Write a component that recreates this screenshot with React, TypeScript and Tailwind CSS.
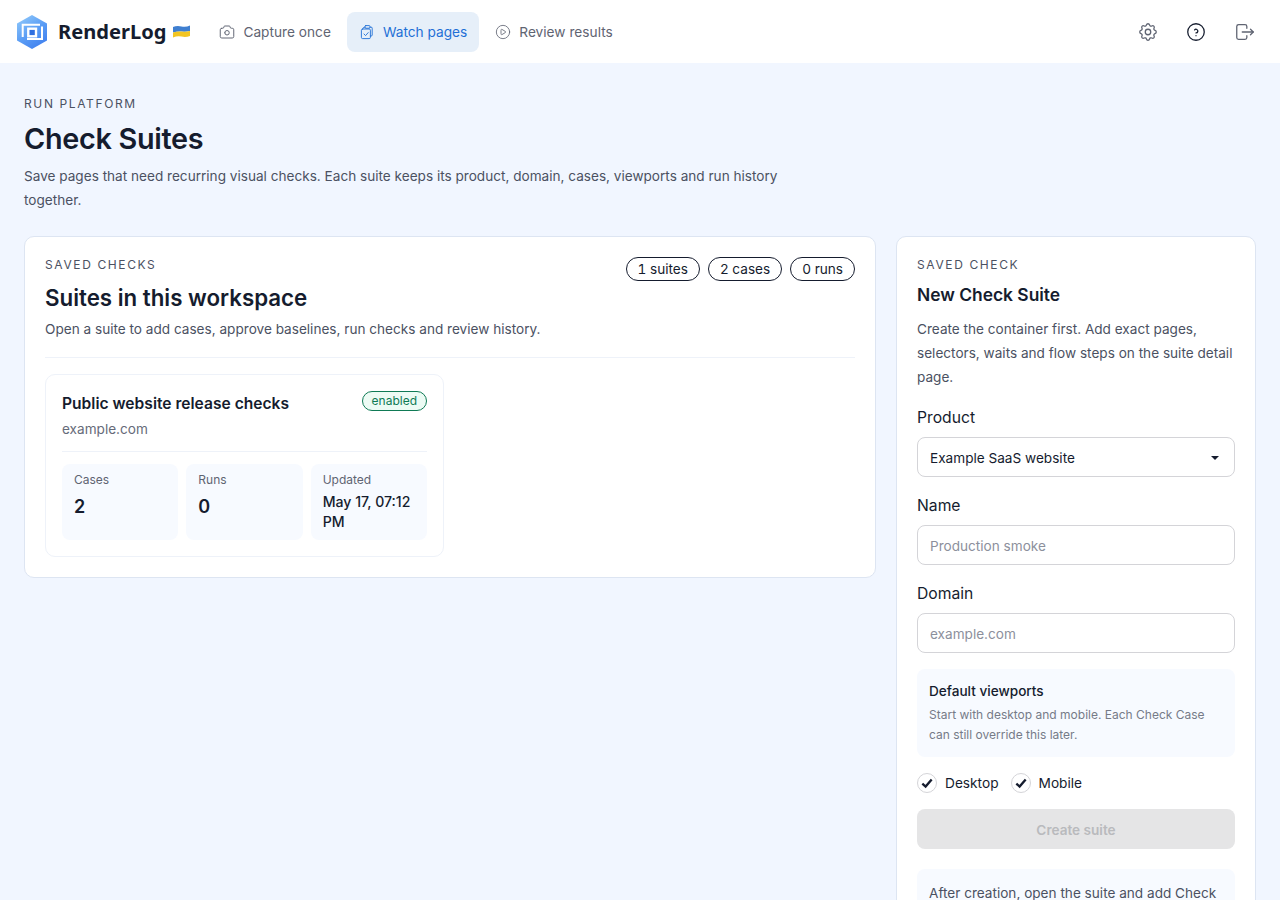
import { CirclePlay } from "lucide-react";
import { TbCamera, TbHelpCircle, TbLogout, TbSettings } from "react-icons/tb";

const Logo = () => (
  <svg width="32" height="36" viewBox="0 0 32 36" fill="none" className="shrink-0">
    <defs>
      <linearGradient id="hex" x1="4" y1="2" x2="28" y2="34" gradientUnits="userSpaceOnUse">
        <stop offset="0" stopColor="#8fc8fa" />
        <stop offset="0.5" stopColor="#5b9df5" />
        <stop offset="1" stopColor="#3d7dee" />
      </linearGradient>
    </defs>
    <path d="M16 1 L31 9.5 V26.5 L16 35 L1 26.5 V9.5 Z" fill="url(#hex)" />
    <path d="M6.7 23 V10.7 H24" stroke="#fff" strokeWidth="2" fill="none" />
    <path d="M26 12.5 V25 H11" stroke="#fff" strokeWidth="2" fill="none" />
    <rect x="12.3" y="14.7" width="7.7" height="7.6" fill="#2f6fe0" stroke="#fff" strokeWidth="2.4" />
  </svg>
);

const Flag = () => (
  <svg width="17" height="13" viewBox="0 0 17 13" className="shrink-0">
    <path d="M0 2 Q4 0.5 8.5 1.5 T17 0.5 V6 Q12.5 7 8.5 6.5 T0 7.5 Z" fill="#3f7fd0" />
    <path d="M0 7.5 Q4 6 8.5 6.5 T17 6 V11 Q12.5 12.5 8.5 11.5 T0 12.5 Z" fill="#f2c522" />
  </svg>
);

const WatchIcon = () => (
  <svg width="16" height="16" viewBox="0 0 16 16" fill="none" stroke="currentColor" strokeWidth="0.9" strokeLinejoin="round" strokeLinecap="round">
    <path d="M6 3.2 H5 A1 1 0 0 0 4.2 4.2 M11 3.2 H12 A1 1 0 0 1 13.2 4.2 V11 A1 1 0 0 1 12.2 12 H11.4" />
    <rect x="6" y="1.6" width="5" height="2.6" rx="0.8" />
    <rect x="2.4" y="5" width="9" height="9.6" rx="1.2" />
    <path d="M5 10 L6.6 11.6 L9.2 8.6" />
  </svg>
);

const nav = [
  { label: "Capture once", icon: <TbCamera size={18} strokeWidth={1.3} className="-mx-px" />, active: false },
  { label: "Watch pages", icon: <WatchIcon />, active: true },
  { label: "Review results", icon: <CirclePlay size={16} strokeWidth={1.25} />, active: false },
];

function TopBar() {
  return (
    <header className="flex h-[63px] items-center bg-white pl-4 pr-[15px]">
      <Logo />
      <span className="ml-[10px] pt-[2px] text-[20.1px] font-bold leading-none text-[#151c2e] [font-family:'Noto_Sans',sans-serif]">
        RenderLog
      </span>
      <span className="ml-[7px] mr-[17px]">
        <Flag />
      </span>
      <nav className="flex gap-1">
        {nav.map((item) => (
          <a
            key={item.label}
            className={
              item.active
                ? "flex h-10 items-center gap-2 rounded-lg bg-[#e6eff9] px-3 text-[13.7px] text-[#1f6fd6]"
                : "flex h-10 items-center gap-2 rounded-lg px-3 text-[13.7px] text-[#5f6472]"
            }
          >
            {item.icon}
            <span className="pt-[2px]">{item.label}</span>
          </a>
        ))}
      </nav>
      <div className="ml-auto flex items-center gap-2">
        <button className="flex size-10 items-center justify-center text-[#5f6472]">
          <TbSettings size={22} strokeWidth={1.4} />
        </button>
        <button className="flex size-10 items-center justify-center text-[#151c2e]">
          <TbHelpCircle size={22} strokeWidth={1.4} />
        </button>
        <button className="ml-px flex size-10 items-center justify-center text-[#5f6472]">
          <TbLogout size={22} strokeWidth={1.4} />
        </button>
      </div>
    </header>
  );
}

const Eyebrow = ({ children }: { children: string }) => (
  <p className="text-xs leading-4 tracking-[0.135em] text-[#4b5162]">{children}</p>
);

const Pill = ({ children }: { children: string }) => (
  <span className="rounded-full border border-[#151c2e] px-[11px] text-[13.6px] leading-[22px] text-[#151c2e] tabular-nums">{children}</span>
);

const Stat = ({ label, value, small }: { label: string; value: string; small?: boolean }) => (
  <div className="rounded-lg bg-[#f7faff] px-3 py-2">
    <p className="text-xs leading-4 text-[#5f6472]">{label}</p>
    <p className={small ? "mt-1 text-[14.08px] font-medium leading-5 text-[#151c2e]" : "mt-[5px] text-lg font-semibold leading-7 text-[#151c2e]"}>
      {value}
    </p>
  </div>
);

const Field = ({ label, children }: { label: string; children: React.ReactNode }) => (
  <div>
    <p className="mb-2 text-[15.7px] leading-[22px] text-[#151c2e]">{label}</p>
    {children}
  </div>
);

const Check = ({ label }: { label: string }) => (
  <label className="flex items-center gap-2 text-[13.7px] leading-5 text-[#151c2e]">
    <span className="flex size-5 items-center justify-center rounded-full border border-[#d4d4d8] bg-white">
      <svg width="14" height="14" viewBox="0 0 12 12" fill="none" stroke="#151c2e" strokeWidth="2">
        <path d="M2 6.5 L4.8 9 L10 3" />
      </svg>
    </span>
    {label}
  </label>
);

function SuitesCard() {
  return (
    <section className="flex-1 self-start rounded-[10px] border border-[#dde5f2] bg-white p-5">
      <div className="flex items-start justify-between">
        <div>
          <Eyebrow>SAVED CHECKS</Eyebrow>
          <h2 className="mt-[11px] text-[22.3px] font-semibold leading-7 text-[#151c2e]">Suites in this workspace</h2>
          <p className="mt-[5px] text-[13.6px] leading-6 text-[#4b5162]">
            Open a suite to add cases, approve baselines, run checks and review history.
          </p>
        </div>
        <div className="flex gap-2">
          <Pill>1 suites</Pill>
          <Pill>2 cases</Pill>
          <Pill>0 runs</Pill>
        </div>
      </div>
      <div className="mt-4 border-t border-[#eef2f9]" />
      <article className="mt-4 w-[399px] rounded-[10px] border border-[#eef2f9] bg-white p-4">
        <div className="flex items-start justify-between">
          <div>
            <h3 className="text-[15.6px] font-semibold leading-[26px] text-[#151c2e]">Public website release checks</h3>
            <p className="text-[13.6px] leading-6 text-[#666b79]">example.com</p>
          </div>
          <span className="rounded-full border border-[#0f7a55] bg-[#ecfbf4] px-[9px] text-xs leading-[18px] text-[#0f7a55]">enabled</span>
        </div>
        <div className="mt-[10px] border-t border-[#eef2f9]" />
        <div className="mt-3 grid grid-cols-3 gap-2">
          <Stat label="Cases" value="2" />
          <Stat label="Runs" value="0" />
          <Stat label="Updated" value="May 17, 07:12 PM" small />
        </div>
      </article>
    </section>
  );
}

function NewSuiteCard() {
  return (
    <aside className="w-[360px] shrink-0 rounded-[10px] border border-[#dde5f2] bg-white p-5">
      <Eyebrow>SAVED CHECK</Eyebrow>
      <h2 className="mt-[10px] text-[17.4px] font-semibold leading-6 text-[#151c2e]">New Check Suite</h2>
      <p className="mt-[10px] text-[13.6px] leading-6 text-[#4b5162]">
        Create the container first. Add exact pages, selectors, waits and flow steps on the suite detail page.
      </p>
      <div className="mt-[18px] flex flex-col gap-[18px]">
        <Field label="Product">
          <div className="flex h-10 items-center justify-between rounded-lg border border-[#d4d4d8] px-3 pt-[2px] text-[13.6px] text-[#151c2e]">
            Example SaaS website
            <span className="mr-[3px] border-x-4 border-t-[4px] border-x-transparent border-t-[#151c2e]" />
          </div>
        </Field>
        <Field label="Name">
          <input placeholder="Production smoke" className="h-10 w-full rounded-lg border border-[#d4d4d8] px-3 pt-[2px] text-[13.6px] placeholder:text-[#8c909c]" />
        </Field>
        <Field label="Domain">
          <input placeholder="example.com" className="h-10 w-full rounded-lg border border-[#d4d4d8] px-3 pt-[2px] text-[13.6px] placeholder:text-[#8c909c]" />
        </Field>
      </div>
      <div className="mt-4 rounded-lg bg-[#f7faff] px-3 py-3">
        <p className="text-[13.6px] font-medium leading-5 text-[#151c2e]">Default viewports</p>
        <p className="mt-[4px] text-xs leading-5 text-[#767b88]">
          Start with desktop and mobile. Each Check Case can still override this later.
        </p>
      </div>
      <div className="mt-4 flex gap-3">
        <Check label="Desktop" />
        <Check label="Mobile" />
      </div>
      <button className="mt-4 h-10 w-full rounded-lg bg-[#e5e5e6] pt-[2px] text-[13.6px] font-semibold text-[#b9babd]">Create suite</button>
      <div className="mt-5 rounded-lg bg-[#f7faff] p-3 text-[13.6px] leading-6 text-[#4b5162]">
        After creation, open the suite and add Check Cases for the pages you want to watch.
      </div>
    </aside>
  );
}

export default function App() {
  return (
    <div className="min-h-screen bg-[#f1f6ff] [font-family:Inter,sans-serif]">
      <TopBar />
      <main className="px-6 pt-[33px] pb-6">
        <Eyebrow>RUN PLATFORM</Eyebrow>
        <h1 className="mt-[9px] text-[28.8px] font-semibold leading-9 tracking-[-0.3px] text-[#151c2e]">Check Suites</h1>
        <p className="mt-[7px] max-w-[780px] text-[13.6px] leading-6 text-[#4b5162]">
          Save pages that need recurring visual checks. Each suite keeps its product, domain, cases, viewports and run history together.
        </p>
        <div className="mt-6 flex gap-5">
          <SuitesCard />
          <NewSuiteCard />
        </div>
      </main>
    </div>
  );
}
